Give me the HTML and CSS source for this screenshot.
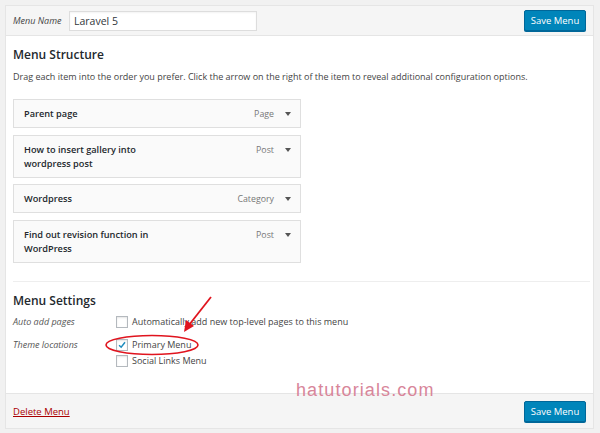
FILE: index.html
```html
<!DOCTYPE html>
<html>
<head>
<meta charset="utf-8">
<link rel="stylesheet" href="styles.css">
</head>
<body>
<div class="panel">
  <div class="header">
    <label class="name-label">Menu Name</label>
    <div class="name-input">Laravel 5</div>
    <span class="spacer"></span>
    <button class="btn">Save Menu</button>
  </div>
  <div class="body">
    <h3 class="heading">Menu Structure</h3>
    <p class="desc">Drag each item into the order you prefer. Click the arrow on the right of the item to reveal additional configuration options.</p>
    <ul class="items">
      <li class="item"><span class="title">Parent page</span><span class="type">Page</span><span class="caret"></span></li>
      <li class="item"><span class="title">How to insert gallery into<br>wordpress post</span><span class="type">Post</span><span class="caret"></span></li>
      <li class="item"><span class="title">Wordpress</span><span class="type">Category</span><span class="caret"></span></li>
      <li class="item"><span class="title">Find out revision function in<br>WordPress</span><span class="type">Post</span><span class="caret"></span></li>
    </ul>
    <div class="sep"></div>
    <h3 class="heading h2">Menu Settings</h3>
    <div class="settings">
      <div class="row">
        <span class="lbl">Auto add pages</span>
        <div class="opts">
          <div class="opt"><span class="cb"></span>Automatically add new top-level pages to this menu</div>
        </div>
      </div>
      <div class="row">
        <span class="lbl">Theme locations</span>
        <div class="opts">
          <div class="opt"><span class="cb checked"><svg viewBox="0 0 12 12" width="12" height="12"><path d="M2.5 6.2 L5 8.6 L9.6 2.8" fill="none" stroke="#1e8cbe" stroke-width="1.8"/></svg></span>Primary Menu</div>
          <div class="opt"><span class="cb"></span>Social Links Menu</div>
        </div>
      </div>
    </div>
  </div>
  <div class="footer">
    <a class="delete">Delete Menu</a>
    <span class="spacer"></span>
    <button class="btn">Save Menu</button>
  </div>
</div>
<div class="watermark">hatutorials.com</div>
<svg class="annot" width="600" height="433" viewBox="0 0 600 433">
  <ellipse cx="152" cy="345" rx="46" ry="9.5" fill="none" stroke="#e0141e" stroke-width="1.6"/>
  <line x1="211" y1="297" x2="189" y2="325" stroke="#e0141e" stroke-width="1.8"/>
  <polygon points="184,332 186,320 194,326" fill="#e0141e"/>
</svg>
</body>
</html>
```
FILE: styles.css
```css
* { box-sizing: border-box; }
body {
  margin: 0;
  padding: 5px 6px 4px 5px;
  background: #f1f1f1;
  font-family: "Open Sans", "Noto Sans", sans-serif;
  color: #23282d;
  position: relative;
  width: 600px;
  height: 433px;
  overflow: hidden;
}
.panel {
  border: 1px solid #e5e5e5;
  background: #fff;
  height: 424px;
  display: flex;
  flex-direction: column;
}
.header {
  height: 30px;
  background: #f5f5f5;
  border-bottom: 1px solid #e5e5e5;
  display: flex;
  align-items: center;
  padding: 0 7px 0 7px;
}
.name-label {
  font-style: italic;
  font-size: 9px;
  color: #444;
  width: 56px;
}
.name-input {
  width: 188px;
  height: 20px;
  border: 1px solid #ddd;
  background: #fff;
  font-size: 10.5px;
  line-height: 18px;
  padding-left: 4px;
  color: #32373c;
  box-shadow: inset 0 1px 2px rgba(0,0,0,.05);
}
.spacer { flex: 1; }
.btn {
  width: 62px;
  height: 21px;
  background: #0085ba;
  border: 1px solid #006799;
  border-radius: 2px;
  color: #fff;
  font-family: "Open Sans", sans-serif;
  font-size: 9.5px;
  padding: 0;
  box-shadow: 0 1px 0 #006799;
}
.body {
  flex: 1;
  padding: 0 4px 0 7px;
}
.heading {
  margin: 0;
  font-size: 12px;
  font-weight: 600;
  color: #23282d;
  padding-top: 11px;
  line-height: 16px;
}
.desc {
  margin: 7px 0 0;
  font-size: 9px;
  line-height: 13px;
  color: #444;
}
.items {
  list-style: none;
  margin: 16px 0 0;
  padding: 0;
  width: 288px;
}
.item {
  display: flex;
  align-items: flex-start;
  border: 1px solid #dfdfdf;
  background: #fafafa;
  margin-bottom: 6px;
  padding: 7px 0 6px 10px;
  font-size: 9.2px;
  line-height: 14px;
}
.item:nth-child(odd) { margin-bottom: 7px; }
.title {
  flex: 1;
  font-weight: 600;
  color: #23282d;
}
.type {
  color: #777;
  font-size: 8.8px;
  margin-right: 7px;
}
.caret {
  width: 0; height: 0;
  border-left: 3px solid transparent;
  border-right: 3px solid transparent;
  border-top: 4px solid #555;
  margin: 5px 9px 0 4px;
}
.sep {
  margin-top: 18px;
  border-top: 1px solid #eee;
  height: 0;
  width: 577px;
}
.h2 { padding-top: 11px; }
.settings { margin-top: 6px; }
.row {
  display: flex;
  align-items: flex-start;
}
.row + .row { margin-top: 9px; }
.lbl {
  width: 103px;
  font-style: italic;
  font-size: 9px;
  line-height: 14px;
  color: #555;
}
.opts { display: flex; flex-direction: column; gap: 2px; }
.opt {
  display: flex;
  align-items: center;
  font-size: 9px;
  line-height: 14px;
  color: #444;
}
.cb {
  width: 12px;
  height: 12px;
  border: 1px solid #b4b9be;
  background: #fff;
  margin-right: 4px;
  display: inline-flex;
  align-items: center;
  justify-content: center;
  box-shadow: inset 0 1px 2px rgba(0,0,0,.1);
}
.cb svg { display: block; }
.watermark {
  position: absolute;
  left: 296px;
  top: 379px;
  font-family: "Liberation Sans", sans-serif;
  font-size: 18px;
  line-height: 22px;
  letter-spacing: 1.1px;
  color: #d8869a;
}
.footer {
  height: 35px;
  background: #f5f5f5;
  border-top: 1px solid #e5e5e5;
  display: flex;
  align-items: center;
  padding: 0 7px;
}
.delete {
  font-size: 9.5px;
  color: #a00;
  text-decoration: underline;
}
.annot {
  position: absolute;
  left: 0;
  top: 0;
  pointer-events: none;
}
```
